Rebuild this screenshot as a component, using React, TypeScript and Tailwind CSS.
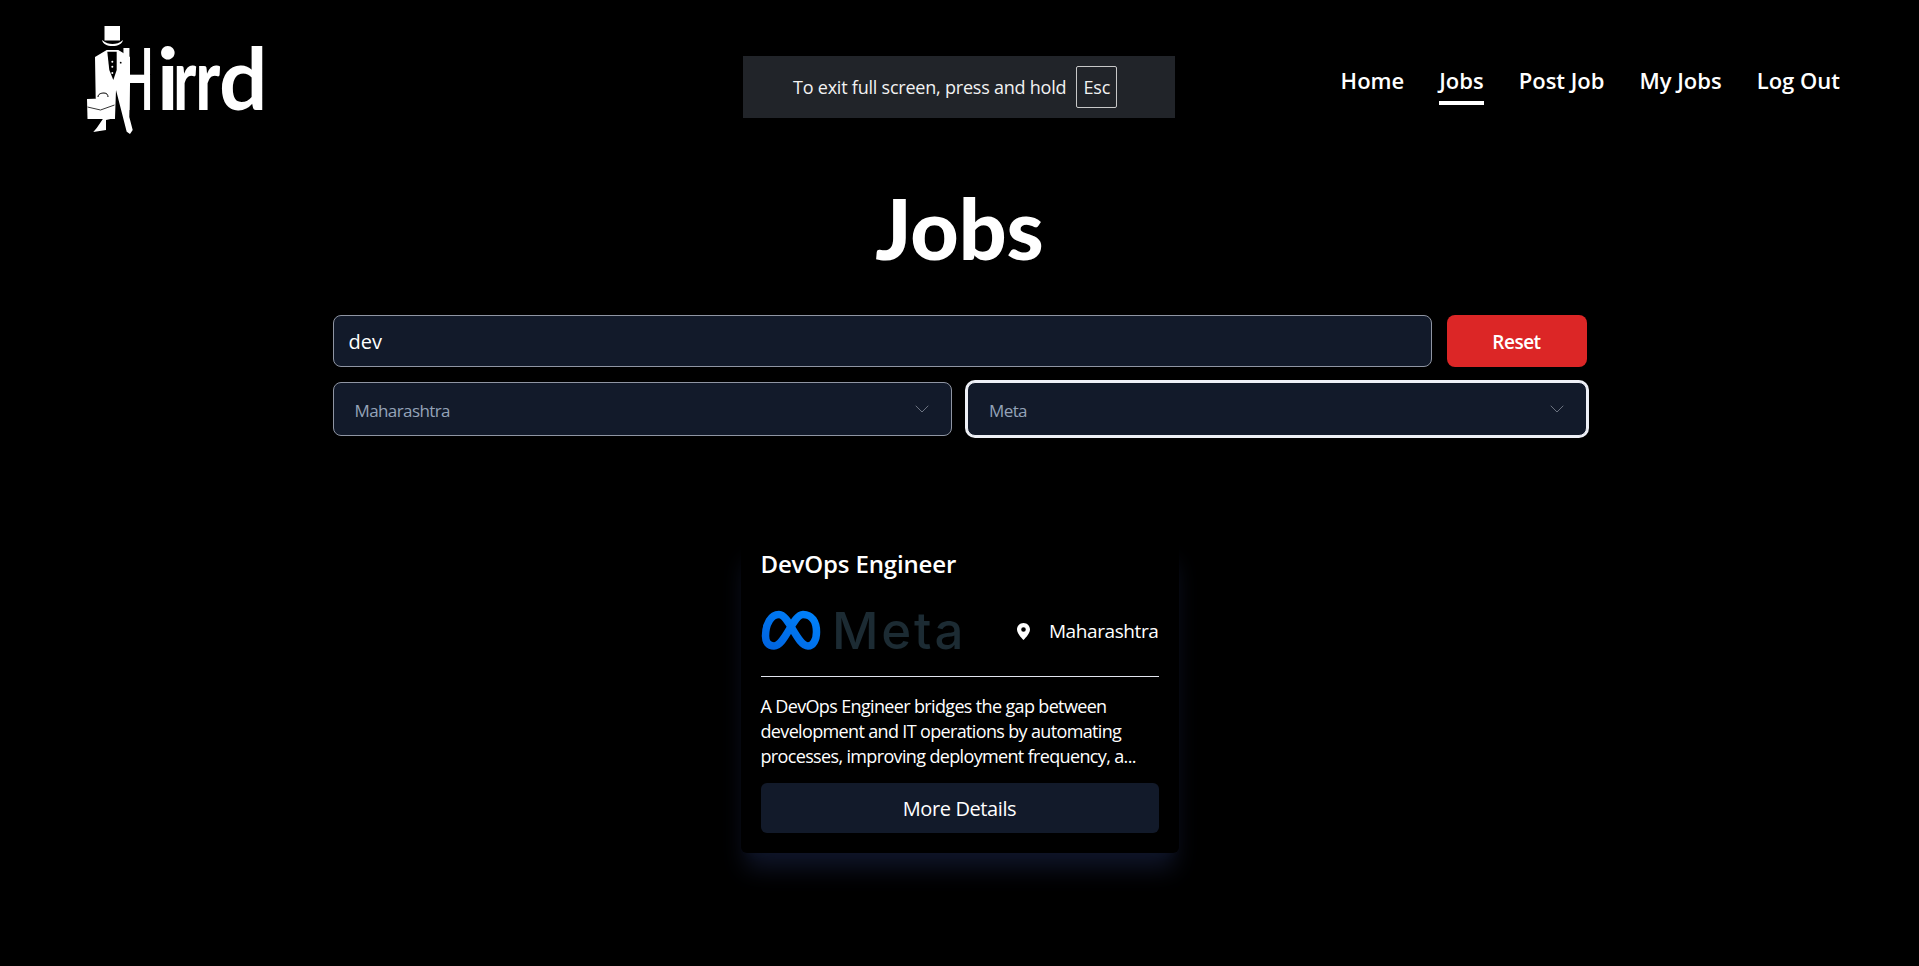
import { ChevronDown } from 'lucide-react';

const navLinks = ['Home', 'Jobs', 'Post Job', 'My Jobs', 'Log Out'];

// each letter of the wordmark is squeezed on its own, the logo is very narrow
const logoLetters = [
  { ch: 'H', x: 35, sx: 0.5 },
  { ch: 'i', x: 72, sx: 0.98 },
  { ch: 'r', x: 88, sx: 0.72 },
  { ch: 'r', x: 110, sx: 0.78 },
  { ch: 'd', x: 134, sx: 0.98 },
];

function HirrdLogo() {
  return (
    <svg width="180" height="110" viewBox="0 0 180 110" className="block overflow-visible">
      {/* hat */}
      <path d="M19.5 1H35v14.5H19.5z" fill="#fff" />
      <path d="M17 15c4 3 7 4 10.500 4s7-1 10.500-4c-1 4-5 6-10.500 6S18 19 17 15z" fill="#fff" />
      {/* suit and legs */}
      <path
        d="M10 32l11.700-7h11.600L45 32v28l-.7 32 3.400 13-2.700 4-3.300-2.300L31 65l-1 28-9 2v10l-12.700 2 3.400-4 6-8.700-7-21z"
        fill="#fff"
      />
      <path d="M22.300 26.700h9.400V45l-3.400 10-4-10z" fill="#000" />
      <circle cx="27.300" cy="36.700" r="1" fill="#fff" />
      <circle cx="27.300" cy="41.700" r="1" fill="#fff" />
      <circle cx="27.300" cy="48" r="1" fill="#fff" />
      <circle cx="35.700" cy="37.700" r="0.900" fill="#000" />
      {/* briefcase */}
      <path d="M2 74l27-1 1 21H2.500z" fill="#fff" />
      <path d="M13 72c0-3 3-4 6-4 3 0 4 2 4 4" fill="none" stroke="#000" strokeWidth="1" />
      <path d="M2.500 82l13 3 14-5" fill="none" stroke="#000" strokeWidth="0.800" />
      {/* wordmark */}
      {logoLetters.map((l, i) => (
        <text
          key={i}
          transform={`translate(${l.x} 85) scale(${l.sx} 1)`}
          fill="#fff"
          fontFamily="Lato, sans-serif"
          fontWeight="700"
          fontSize="87"
        >
          {l.ch}
        </text>
      ))}
    </svg>
  );
}

function MetaLogo() {
  return (
    <svg width="212" height="42" viewBox="0 0 212 42" className="block overflow-visible">
      <defs>
        <linearGradient id="metaBlue" x1="0" y1="1" x2="1" y2="0">
          <stop offset="0" stopColor="#0064e0" />
          <stop offset="1" stopColor="#0082fb" />
        </linearGradient>
      </defs>
      <path
        d="M4.500 26C4.500 14 10 4.500 18 4.500 28 4.500 36 36 47 36 52 36 55.500 30 55.500 22 55.500 12 51 4.500 42 4.500 32 4.500 24 36 13 36 7.500 36 4.500 32 4.500 26z"
        fill="none"
        stroke="url(#metaBlue)"
        strokeWidth="7.500"
      />
      <text
        x="71"
        y="39"
        fill="#1c2b33"
        fontFamily="Inter, sans-serif"
        fontWeight="500"
        fontSize="51"
        letterSpacing="2.800"
      >
        Meta
      </text>
    </svg>
  );
}

function PinIcon() {
  return (
    <svg width="13" height="17" viewBox="0 0 13 17">
      <path
        fillRule="evenodd"
        d="M6.500 0C2.900 0 0 2.900 0 6.500 0 11 6.500 17 6.500 17S13 11 13 6.500C13 2.900 10.100 0 6.500 0zm0 4.200a2.300 2.300 0 1 1 0 4.600 2.300 2.300 0 0 1 0-4.600z"
        fill="#fff"
      />
    </svg>
  );
}

function FilterSelect({ label, focused }: { label: string; focused?: boolean }) {
  return (
    <button
      className={
        focused
          ? 'flex h-[54px] items-center justify-between rounded-lg border border-[#eef0f6] bg-[#121a2a] pl-[21px] pr-[17px] text-[17px] tracking-[-0.6px] text-[#94a3b8] ring-2 ring-[#eef0f6]'
          : 'flex h-[54px] items-center justify-between rounded-lg border border-[#8f95a3] bg-[#121a2a] pl-[21px] pr-[17px] text-[17px] tracking-[-0.6px] text-[#94a3b8]'
      }
    >
      <span className="pt-[3px]">{label}</span>
      <ChevronDown size={24} strokeWidth={1} className="text-[#6b7280]" />
    </button>
  );
}

export default function App() {
  return (
    <div className="relative min-h-[966px] bg-black font-['Open_Sans',sans-serif] text-white">
      <header className="flex h-[150px] items-start justify-between pl-[85px] pr-[79px] pt-[25px]">
        <HirrdLogo />
        <nav className="mt-[37px] flex gap-[35px] text-[22px] font-semibold">
          {navLinks.map((link) => (
            <a
              key={link}
              className={
                link === 'Jobs'
                  ? 'border-b-4 border-white pb-[3px] leading-[36px]'
                  : 'pb-[3px] leading-[36px]'
              }
            >
              {link}
            </a>
          ))}
        </nav>
      </header>

      {/* browser full screen notice */}
      <div className="absolute left-[743px] top-[56px] flex h-[62px] w-[432px] items-center gap-[10px] bg-[#212429] pl-[50px] text-[18px] tracking-[-0.22px] text-[#f2f2f2]">
        To exit full screen, press and hold
        <span className="flex h-[42px] w-[41px] items-center justify-center rounded-[2px] border border-[#c8c8c8]">
          Esc
        </span>
      </div>

      <main className="flex flex-col items-center">
        <h1 className="mt-[28px] font-['Lato',sans-serif] text-[84px] font-black leading-[100px]">Jobs</h1>

        <div className="mt-[37px] w-[1254px]">
          <div className="flex gap-[15px]">
            <input
              readOnly
              value="dev"
              className="h-[52px] flex-1 rounded-lg border border-[#8f95a3] bg-[#121a2a] px-[15px] text-[20px] outline-none"
            />
            <button className="h-[52px] w-[140px] rounded-lg bg-[#dc2626] pt-[2px] text-[19px] font-semibold tracking-[-0.5px]">
              Reset
            </button>
          </div>
          <div className="mt-[15px] grid grid-cols-2 gap-[15px]">
            <FilterSelect label="Maharashtra" />
            <FilterSelect label="Meta" focused />
          </div>
        </div>

        <article className="mt-[102px] w-[438px] rounded-md bg-black px-[20px] pb-[20px] pt-[10px] shadow-[0_20px_25px_-5px_#10162a,0_8px_10px_-6px_rgba(15,23,42,0.6)]">
          <h2 className="text-[24px] font-semibold leading-[32px] tracking-[-0.15px]">DevOps Engineer</h2>
          <div className="mt-[30px] flex items-center justify-between">
            <MetaLogo />
            <div className="flex items-center gap-[19px] text-[19px] tracking-[-0.4px]">
              <PinIcon />
              Maharashtra
            </div>
          </div>
          <hr className="mt-[24px] border-[#e2e5ee]" />
          <p className="mt-[17px] text-[18px] leading-[25px] tracking-[-0.65px]">
            A DevOps Engineer bridges the gap between development and IT operations by automating
            processes, improving deployment frequency, a...
          </p>
          <button className="mt-[14px] h-[50px] w-full rounded-md bg-[#121a2a] pt-[2px] text-[20px] tracking-[-0.4px]">
            More Details
          </button>
        </article>
      </main>
    </div>
  );
}
